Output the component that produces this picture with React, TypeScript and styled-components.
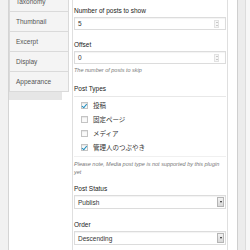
import styled, { createGlobalStyle } from "styled-components";

const GlobalStyle = createGlobalStyle`
  html, body {
    margin: 0;
    padding: 0;
    background: #ffffff;
    overflow: hidden;
  }
  body {
    font-family: "Liberation Sans", Arial, sans-serif;
    color: #222;
  }
`;

export const Frame = styled.div`
  display: flex;
  width: 250px;
  height: 250px;
  overflow: hidden;
`;

export const Gutter = styled.div`
  width: 8px;
  flex-shrink: 0;
  background: #f1f1f1;
  border-right: 1px solid #d4d4d4;
`;

export const TabColumn = styled.div`
  width: 63px;
  flex-shrink: 0;
`;

export const TabList = styled.ul`
  list-style: none;
  margin: -8px 0 0 0;
  padding: 0 0 8px 0;
  width: 53px;
  background: #e6e6e6;
`;

export const Tab = styled.li`
  display: flex;
  align-items: center;
  box-sizing: border-box;
  width: 60px;
  height: 20px;
  padding-left: 6px;
  background: #f4f4f4;
  border: 1px solid #dadada;
  border-top: none;
  font-size: 6.5px;
  color: #555;
`;

export const Panel = styled.div`
  width: 152px;
  flex-shrink: 0;
  border-left: 1px solid #dfdfdf;
  border-right: 1px solid #dfdfdf;
  padding: 6px 1px 0 1px;
  box-sizing: content-box;
`;

export const Label = styled.div<{ $top?: number }>`
  font-size: 6.5px;
  line-height: 9px;
  color: #222;
  margin-top: ${(p) => p.$top ?? 0}px;
  margin-bottom: 2px;
`;

export const Field = styled.div`
  display: flex;
  align-items: center;
  justify-content: space-between;
  box-sizing: border-box;
  height: 13px;
  padding: 0 3px;
  border: 1px solid #dcdcdc;
  box-shadow: inset 0 1px 1px rgba(0, 0, 0, 0.05);
  font-size: 6.5px;
  color: #333;
`;

export const SelectField = styled(Field)`
  height: 14px;
  padding-right: 1px;
`;

export const Spinner = styled.span`
  display: flex;
  flex-direction: column;
  align-items: center;
  justify-content: space-around;
  box-sizing: border-box;
  width: 5px;
  height: 8px;
  border: 1px solid #e2e2e2;
  background: #f6f6f6;
  margin-right: 3px;

  &::before,
  &::after {
    content: "";
    width: 0;
    height: 0;
    border-left: 1px solid transparent;
    border-right: 1px solid transparent;
  }
  &::before {
    border-bottom: 1.5px solid #999;
  }
  &::after {
    border-top: 1.5px solid #999;
  }
`;

export const DropButton = styled.span`
  display: flex;
  align-items: center;
  justify-content: center;
  box-sizing: border-box;
  width: 7px;
  height: 10px;
  border: 1px solid #b5b5b5;
  background: linear-gradient(#f2f2f2, #d8d8d8);

  &::after {
    content: "";
    width: 0;
    height: 0;
    border-left: 1.5px solid transparent;
    border-right: 1.5px solid transparent;
    border-top: 2px solid #222;
  }
`;

export const Hint = styled.div<{ $top?: number }>`
  font-size: 5.5px;
  line-height: 8px;
  font-style: italic;
  color: #777;
  margin-top: ${(p) => p.$top ?? 0}px;
`;

export const CheckList = styled.ul`
  list-style: none;
  margin: 3px 0 0 0;
  padding: 1px 0 2px 0;
  border-top: 1px solid #e8e8e8;
  border-bottom: 1px solid #f0f0f0;
`;

export const CheckRow = styled.li`
  display: flex;
  align-items: center;
  height: 14px;
  padding-left: 7px;
  font-size: 6.5px;
  color: #333;
  font-family: "Noto Sans CJK JP", "Liberation Sans", sans-serif;
`;

export const Box = styled.span<{ $checked?: boolean }>`
  position: relative;
  box-sizing: border-box;
  width: 7px;
  height: 7px;
  margin-right: 5px;
  border: 1px solid #c4c4c4;
  background: #fafafa;
  box-shadow: inset 0 1px 1px rgba(0, 0, 0, 0.08);

  &::after {
    content: "";
    display: ${(p) => (p.$checked ? "block" : "none")};
    position: absolute;
    left: 1px;
    top: 0px;
    width: 2px;
    height: 3.5px;
    border-right: 1.2px solid #1e8cbe;
    border-bottom: 1.2px solid #1e8cbe;
    transform: rotate(40deg);
  }
`;

export const Spacer = styled.div`
  width: 9px;
  flex-shrink: 0;
`;

export const Scrollbar = styled.div`
  width: 7px;
  flex-shrink: 0;
  background: #ececec;
  border-left: 1px solid #cfcfcf;
  border-right: 1px solid #dcdcdc;
`;

export const Edge = styled.div`
  flex: 1;
  background: #f7f7f7;
`;

const tabs = ["Taxonomy", "Thumbnail", "Excerpt", "Display", "Appearance"];

const postTypes = [
  { name: "投稿", checked: true },
  { name: "固定ページ", checked: false },
  { name: "メディア", checked: false },
  { name: "管理人のつぶやき", checked: true },
];

function App() {
  return (
    <>
      <GlobalStyle />
      <Frame>
        <Gutter />
        <TabColumn>
          <TabList>
            {tabs.map((t) => (
              <Tab key={t}>{t}</Tab>
            ))}
          </TabList>
        </TabColumn>
        <Panel>
          <Label>Number of posts to show</Label>
          <Field>
            <span>5</span>
            <Spinner />
          </Field>
          <Label $top={10}>Offset</Label>
          <Field>
            <span>0</span>
            <Spinner />
          </Field>
          <Hint $top={2}>The number of posts to skip</Hint>
          <Label $top={10}>Post Types</Label>
          <CheckList>
            {postTypes.map((p) => (
              <CheckRow key={p.name}>
                <Box $checked={p.checked} />
                {p.name}
              </CheckRow>
            ))}
          </CheckList>
          <Hint $top={3}>
            Please note, Media post type is not supported by this plugin yet
          </Hint>
          <Label $top={8}>Post Status</Label>
          <SelectField>
            <span>Publish</span>
            <DropButton />
          </SelectField>
          <Label $top={11}>Order</Label>
          <SelectField>
            <span>Descending</span>
            <DropButton />
          </SelectField>
        </Panel>
        <Spacer />
        <Scrollbar />
        <Edge />
      </Frame>
    </>
  );
}

export default App;
